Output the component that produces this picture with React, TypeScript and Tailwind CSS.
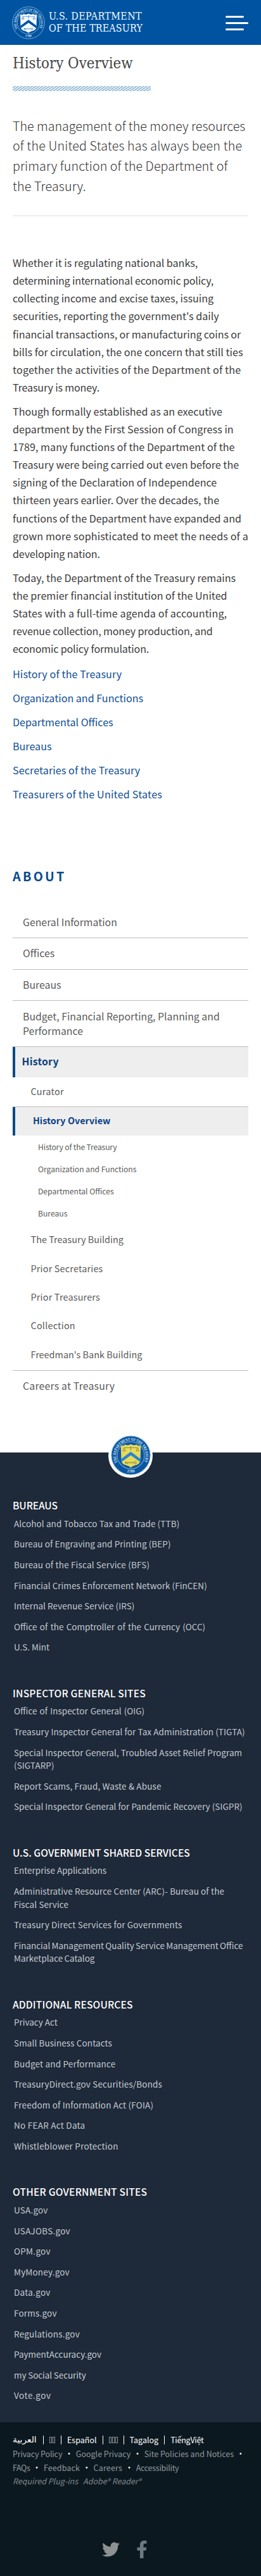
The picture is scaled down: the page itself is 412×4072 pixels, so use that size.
import { Fragment } from 'react'
import { FaFacebookF, FaTwitter } from 'react-icons/fa'

/** A line of text and the spacing class that tunes its set width. */
type Line = [text: string, spacing: string]

const lead: Line[] = [
  ['The management of the money resources', ''],
  ['of the United States has always been the', 'tracking-[0.17px]'],
  ['primary function of the Department of', 'tracking-[0.08px]'],
  ['the Treasury.', 'tracking-[0.16px]'],
]

const paragraphs: Line[][] = [
  [
    ['Whether it is regulating national banks,', ''],
    ['determining international economic policy,', 'tracking-[-0.15px]'],
    ['collecting income and excise taxes, issuing', ''],
    ["securities, reporting the government's daily", ''],
    ['financial transactions, or manufacturing coins or', '[word-spacing:-0.4px]'],
    ['bills for circulation, the one concern that still ties', ''],
    ['together the activities of the Department of the', 'tracking-[0.18px]'],
    ['Treasury is money.', 'tracking-[-0.16px]'],
  ],
  [
    ['Though formally established as an executive', ''],
    ['department by the First Session of Congress in', 'tracking-[0.05px]'],
    ['1789, many functions of the Department of the', 'tracking-[0.05px]'],
    ['Treasury were being carried out even before the', ''],
    ['signing of the Declaration of Independence', 'tracking-[0.03px]'],
    ['thirteen years earlier. Over the decades, the', 'tracking-[0.03px]'],
    ['functions of the Department have expanded and', 'tracking-[-0.02px]'],
    ['grown more sophisticated to meet the needs of a', 'tracking-[0.15px]'],
    ['developing nation.', 'tracking-[-0.16px]'],
  ],
  [
    ['Today, the Department of the Treasury remains', ''],
    ['the premier financial institution of the United', ''],
    ['States with a full-time agenda of accounting,', 'tracking-[0.14px]'],
    ['revenue collection, money production, and', 'tracking-[-0.16px]'],
    ['economic policy formulation.', 'tracking-[-0.17px]'],
  ],
]

const contentLinks: Line[] = [
  ['History of the Treasury', 'tracking-[0.12px]'],
  ['Organization and Functions', ''],
  ['Departmental Offices', ''],
  ['Bureaus', ''],
  ['Secretaries of the Treasury', 'tracking-[0.09px]'],
  ['Treasurers of the United States', 'tracking-[0.22px]'],
]

const topNav = ['General Information', 'Offices', 'Bureaus', 'Budget, Financial Reporting, Planning and Performance']

const overviewNav: Line[] = [
  ['History of the Treasury', 'tracking-[-0.15px]'],
  ['Organization and Functions', ''],
  ['Departmental Offices', ''],
  ['Bureaus', ''],
]

const historyNav: Line[] = [
  ['The Treasury Building', ''],
  ['Prior Secretaries', 'tracking-[0.17px]'],
  ['Prior Treasurers', 'tracking-[0.17px]'],
  ['Collection', 'tracking-[0.2px]'],
  ["Freedman's Bank Building", ''],
]

const footerGroups: { title: Line; links: Line[] }[] = [
  {
    title: ['BUREAUS', 'tracking-[-0.1px]'],
    links: [
      ['Alcohol and Tobacco Tax and Trade (TTB)', 'tracking-[0.11px]'],
      ['Bureau of Engraving and Printing (BEP)', 'tracking-[0.07px]'],
      ['Bureau of the Fiscal Service (BFS)', 'tracking-[0.17px]'],
      ['Financial Crimes Enforcement Network (FinCEN)', 'tracking-[0.04px]'],
      ['Internal Revenue Service (IRS)', 'tracking-[0.07px]'],
      ['Office of the Comptroller of the Currency (OCC)', '[word-spacing:1.3px]'],
      ['U.S. Mint', ''],
    ],
  },
  {
    title: ['INSPECTOR GENERAL SITES', 'tracking-[0.2px]'],
    links: [
      ['Office of Inspector General (OIG)', '[word-spacing:1.1px]'],
      ['Treasury Inspector General for Tax Administration (TIGTA)', 'tracking-[0.1px]'],
      ['Special Inspector General, Troubled Asset Relief Program (SIGTARP)', 'tracking-[0.07px]'],
      ['Report Scams, Fraud, Waste & Abuse', 'tracking-[0.13px]'],
      ['Special Inspector General for Pandemic Recovery (SIGPR)', 'tracking-[0.05px]'],
    ],
  },
  {
    title: ['U.S. GOVERNMENT SHARED SERVICES', ''],
    links: [
      ['Enterprise Applications', ''],
      ['Administrative Resource Center (ARC)- Bureau of the Fiscal Service', 'tracking-[0.1px]'],
      ['Treasury Direct Services for Governments', 'tracking-[0.17px]'],
      ['Financial Management Quality Service Management Office Marketplace Catalog', '[word-spacing:-0.8px]'],
    ],
  },
  {
    title: ['ADDITIONAL RESOURCES', 'tracking-[0.12px]'],
    links: [
      ['Privacy Act', ''],
      ['Small Business Contacts', 'tracking-[0.1px]'],
      ['Budget and Performance', 'tracking-[0.18px]'],
      ['TreasuryDirect.gov Securities/Bonds', 'tracking-[0.15px]'],
      ['Freedom of Information Act (FOIA)', 'tracking-[0.17px]'],
      ['No FEAR Act Data', 'tracking-[0.26px]'],
      ['Whistleblower Protection', 'tracking-[0.24px]'],
    ],
  },
  {
    title: ['OTHER GOVERNMENT SITES', 'tracking-[0.2px]'],
    links: [
      ['USA.gov', 'tracking-[0.2px]'],
      ['USAJOBS.gov', 'tracking-[0.25px]'],
      ['OPM.gov', 'tracking-[0.28px]'],
      ['MyMoney.gov', 'tracking-[0.18px]'],
      ['Data.gov', 'tracking-[0.28px]'],
      ['Forms.gov', 'tracking-[0.2px]'],
      ['Regulations.gov', 'tracking-[0.22px]'],
      ['PaymentAccuracy.gov', ''],
      ['my Social Security', 'tracking-[-0.1px]'],
      ['Vote.gov', 'tracking-[0.55px]'],
    ],
  },
]

const policyLinks: Line[] = [
  ['Privacy Policy', 'tracking-[-0.15px]'],
  ['Google Privacy', ''],
  ['Site Policies and Notices', ''],
]

const helpLinks: Line[] = [
  ['FAQs', 'tracking-[-0.4px]'],
  ['Feedback', 'tracking-[0.12px]'],
  ['Careers', 'tracking-[0.2px]'],
  ['Accessibility', 'tracking-[-0.27px]'],
]

type SealProps = {
  id: string
  className: string
  disc: string
  ring: string
  text: string
  shield: string
  band: string
  mark: string
}

function Seal({ id, className, disc, ring, text, shield, band, mark }: SealProps) {
  return (
    <svg viewBox="0 0 100 100" className={className} aria-hidden="true">
      <defs>
        <path id={`${id}-top`} d="M 17.2 67.5 A 37 37 0 1 1 82.8 67.5" />
        <path id={`${id}-bottom`} d="M 30 88.5 A 43.5 43.5 0 0 0 70 88.5" />
      </defs>
      <circle cx="50" cy="50" r="48.6" fill={disc} stroke={ring} strokeWidth="1.6" />
      <circle cx="50" cy="50" r="34" fill="none" stroke={ring} strokeWidth="1.6" />
      <text fill={text} fontSize="10.5" fontWeight="700" fontFamily="Liberation Serif, serif">
        <textPath href={`#${id}-top`} textLength="150" lengthAdjust="spacingAndGlyphs">
          THE DEPARTMENT OF THE TREASURY
        </textPath>
      </text>
      <text fill={text} fontSize="10" fontWeight="700" fontFamily="Liberation Serif, serif" textAnchor="middle">
        <textPath href={`#${id}-bottom`} startOffset="50%">
          1789
        </textPath>
      </text>
      <path
        d="M25 25 Q31 28 36 23 Q43 27 50 22 Q57 27 64 23 Q69 28 75 25 L74 62 Q73 73 61 75 Q54 77 50 81 Q46 77 39 75 Q27 73 26 62 Z"
        fill={shield}
      />
      <path d="M25.5 59 L50 41 L74.5 59 L74.5 67.5 L50 50 L25.5 67.5 Z" fill={band} />
      <path d="M33 31 H67 M50 27 V38 M33 31 L29.5 39 H36.5 Z M67 31 L63.5 39 H70.5 Z" fill="none" stroke={mark} strokeWidth="1.5" />
      <path d="M37 68.5 H58 M37 65.5 V71.5 M41 68.5 V72" fill="none" stroke={mark} strokeWidth="1.8" />
      <circle cx="61" cy="68.5" r="2.8" fill="none" stroke={mark} strokeWidth="1.6" />
    </svg>
  )
}

function Lines({ lines }: { lines: Line[] }) {
  return (
    <>
      {lines.map(([text, spacing]) => (
        <span key={text} className={`block whitespace-nowrap ${spacing}`}>
          {text}
        </span>
      ))}
    </>
  )
}

function Header() {
  return (
    <header className="flex h-[71px] items-start justify-between bg-[#0053a0] px-5">
      <a className="flex pt-[10px] text-[#f2fbff]">
        <Seal
          id="header-seal"
          className="-ml-px size-[52px]"
          disc="#0053a0"
          ring="#8fbbe2"
          text="#d5e8f8"
          shield="#f4fbff"
          band="#0053a0"
          mark="#3f7fbd"
        />
        <span className="ml-[6px] flex flex-col pt-[7.4px] font-['DejaVu_Serif_Condensed','DejaVu_Serif',serif] text-[16px] leading-[18.4px] whitespace-nowrap">
          <span className="tracking-[0.34px]">U.S. DEPARTMENT</span>
          <span className="tracking-[0.08px]">OF THE TREASURY</span>
        </span>
      </a>
      <button className="flex w-9 flex-col gap-[7px] pt-[25px]" aria-label="Menu">
        <span className="h-[3px] w-[29px] rounded-full bg-white" />
        <span className="h-[3px] w-9 rounded-full bg-white" />
        <span className="h-[3px] w-[29px] rounded-full bg-white" />
      </button>
    </header>
  )
}

function Article() {
  return (
    <main className="px-5 pt-[13px]">
      <h1 className="font-['DejaVu_Serif_Condensed','DejaVu_Serif',serif] text-[23.8px] leading-8 text-[#444]">
        History Overview
      </h1>
      <div className="mt-5 h-2 w-[218px] bg-[repeating-linear-gradient(145deg,#e0edf5_0px,#e0edf5_1.4px,#8fb4d2_1.9px,#8fb4d2_2.7px,#e0edf5_3.15px)]" />
      <p className="mt-[38.5px] text-[19.65px] leading-[31.8px] font-light text-[#333]">
        <Lines lines={lead} />
      </p>
      <hr className="mt-[30.5px] h-[2px] border-0 bg-[#ededed]" />
      <div className="mt-[59px] flex flex-col gap-[10px] text-[16.1px] leading-[28.1px] text-[#3d3d3d]">
        {paragraphs.map((lines) => (
          <p key={lines[0][0]}>
            <Lines lines={lines} />
          </p>
        ))}
      </div>
      <ul className="mt-[11.8px] mb-[0.7px] flex flex-col gap-[10px] text-[16.1px] leading-[28px] text-[#124f96]">
        {contentLinks.map(([label, spacing]) => (
          <li key={label} className={spacing}>
            <a>{label}</a>
          </li>
        ))}
      </ul>
    </main>
  )
}

function SideNav() {
  return (
    <nav className="px-5 pt-[100.8px] text-[#5b5b5b]">
      <h2 className="text-[19.7px] leading-7 font-bold tracking-[3.3px] text-[#0a4a8f]">ABOUT</h2>
      <ul className="mt-[34.9px] text-[15.85px] leading-[23px]">
        {topNav.map((label) => (
          <li key={label} className="border-b border-[#bdbdbd] pt-[12.4px] pr-8 pb-[13.2px] pl-4">
            {label}
          </li>
        ))}
        <li className="h-12 border-l-4 border-[#0b4a85] bg-[#eee] pt-[11px] pl-[10.5px] font-bold tracking-[0.2px] text-[#0b3f78]">
          History
        </li>
        <li>
          <ul className="text-[14.45px] leading-5">
            <li className="h-[47px] border-b border-[#bdbdbd] pt-[12.4px] pl-[28.5px] tracking-[0.25px]">Curator</li>
            <li className="h-[45px] border-l-4 border-[#0b4a85] bg-[#eee] pt-[11.2px] pl-7 text-[14.3px] font-bold tracking-[0.05px] text-[#0b3f85]">
              History Overview
            </li>
            <li>
              <ul className="text-[12.15px] leading-[35px]">
                {overviewNav.map(([label, spacing]) => (
                  <li key={label} className={`pl-10 ${spacing}`}>
                    {label}
                  </li>
                ))}
              </ul>
            </li>
            <li className="border-b border-[#bdbdbd] pt-[1.5px] pb-[2.8px]">
              <ul className="leading-[45.4px]">
                {historyNav.map(([label, spacing]) => (
                  <li key={label} className={`pl-[28.5px] ${spacing}`}>
                    {label}
                  </li>
                ))}
              </ul>
            </li>
          </ul>
        </li>
        <li className="pt-[11.9px] pb-[0.6px] pl-4 tracking-[0.18px]">Careers at Treasury</li>
      </ul>
    </nav>
  )
}

function FooterSites() {
  return (
    <section className="relative mt-[93.2px] h-[1533px] bg-[#1e2939] pt-[73.3px] pr-[22px] pl-5">
      <div className="absolute -top-[30px] left-[171px] flex size-[70px] items-center justify-center rounded-full bg-white">
        <Seal
          id="footer-seal"
          className="size-[63px]"
          disc="#0b56a0"
          ring="#7fb2dc"
          text="#d8eaf7"
          shield="#e6d95c"
          band="#2d83cf"
          mark="#8b8a3a"
        />
      </div>
      <div className="flex flex-col gap-[51.8px]">
        {footerGroups.map(({ title: [title, titleSpacing], links }) => (
          <div key={title}>
            <h3 className={`text-[15.6px] leading-5 font-medium text-white ${titleSpacing}`}>{title}</h3>
            <ul className="mt-[8.7px] flex flex-col gap-3 pl-[2px] text-[13.5px] leading-[20.6px] text-[#c4cbd2]">
              {links.map(([label, spacing]) => (
                <li key={label} className={spacing}>
                  <a>{label}</a>
                </li>
              ))}
            </ul>
          </div>
        ))}
      </div>
    </section>
  )
}

function MissingGlyphs({ count }: { count: number }) {
  return (
    <span className="flex gap-px">
      {Array.from({ length: count }, (_, i) => (
        <span key={i} className="h-[10px] w-1 border border-[#8d959b]" />
      ))}
    </span>
  )
}

function PolicyRow({ items, trailing }: { items: Line[]; trailing?: boolean }) {
  return (
    <div className="flex whitespace-nowrap">
      {items.map(([label, spacing], i) => (
        <Fragment key={label}>
          <a className={`text-[#8f979d] ${spacing}`}>{label}</a>
          {(trailing || i < items.length - 1) && <span className="w-[21.5px] text-center text-white">•</span>}
        </Fragment>
      ))}
    </div>
  )
}

function Divider() {
  return <span className="h-[14px] w-px bg-white" />
}

function FooterBottom() {
  return (
    <section className="h-[243px] bg-[#0c1820] px-5 pt-[17.2px] text-[12.5px] leading-[21.8px] text-white">
      <div className="flex h-[21.8px] items-center gap-[9px] whitespace-nowrap">
        <a className="w-[39px] font-['DejaVu_Sans',sans-serif] text-[13.8px]" lang="ar">
          العربية
        </a>
        <Divider />
        <MissingGlyphs count={2} />
        <Divider />
        <a>Español</a>
        <Divider />
        <MissingGlyphs count={3} />
        <Divider />
        <a>Tagalog</a>
        <Divider />
        <a className="tracking-[-0.25px]">TiếngViệt</a>
      </div>
      <PolicyRow items={policyLinks} trailing />
      <PolicyRow items={helpLinks} />
      <div className="flex h-[21.8px] gap-2 whitespace-nowrap text-[#7f878d] italic">
        <a>Required Plug-ins</a>
        <a>
          Adobe<span className="align-[1px] text-[11px] leading-none">®</span> Reader
          <span className="align-[1px] text-[11px] leading-none">®</span>
        </a>
      </div>
      <div className="mt-[82.6px] flex items-center justify-center pr-[13px]">
        <FaTwitter size={28} className="text-[#8e9192]" />
        <FaFacebookF size={28} className="ml-[21px] text-[#6d7982]" />
      </div>
    </section>
  )
}

export default function App() {
  return (
    <div className="min-h-[4072px] w-[412px] overflow-hidden bg-white font-['Noto_Sans_CJK_SC',sans-serif]">
      <Header />
      <Article />
      <SideNav />
      <FooterSites />
      <FooterBottom />
    </div>
  )
}
